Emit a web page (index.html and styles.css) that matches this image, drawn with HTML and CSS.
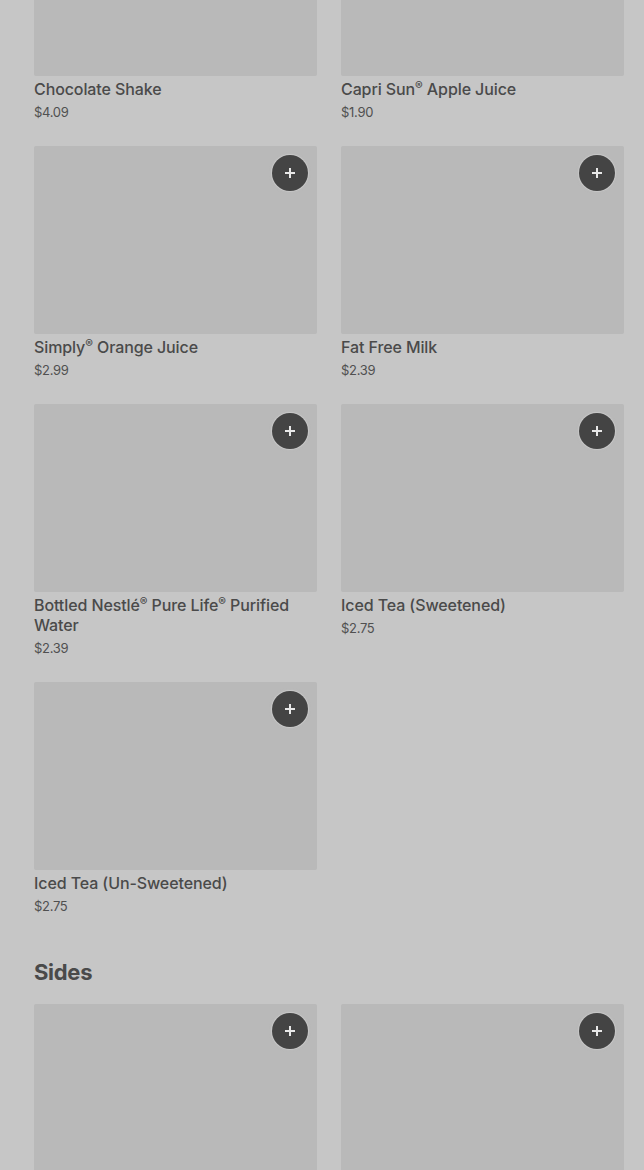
FILE: index.html
```html
<!DOCTYPE html>
<html>
<head>
<meta charset="utf-8">
<link rel="stylesheet" href="styles.css">
</head>
<body>
<main class="page">
  <section class="section">
    <div class="grid first">
      <div class="item">
        <div class="thumb"></div>
        <div class="name">Chocolate Shake</div>
        <div class="price">$4.09</div>
      </div>
      <div class="item">
        <div class="thumb"></div>
        <div class="name">Capri Sun<span class="reg">®</span> Apple Juice</div>
        <div class="price">$1.90</div>
      </div>
      <div class="item">
        <div class="thumb"><button class="add"><svg viewBox="0 0 12 12" width="12" height="12"><path d="M6 1v10M1 6h10" stroke="#e8e8e8" stroke-width="2"/></svg></button></div>
        <div class="name">Simply<span class="reg">®</span> Orange Juice</div>
        <div class="price">$2.99</div>
      </div>
      <div class="item">
        <div class="thumb"><button class="add"><svg viewBox="0 0 12 12" width="12" height="12"><path d="M6 1v10M1 6h10" stroke="#e8e8e8" stroke-width="2"/></svg></button></div>
        <div class="name">Fat Free Milk</div>
        <div class="price">$2.39</div>
      </div>
      <div class="item">
        <div class="thumb"><button class="add"><svg viewBox="0 0 12 12" width="12" height="12"><path d="M6 1v10M1 6h10" stroke="#e8e8e8" stroke-width="2"/></svg></button></div>
        <div class="name">Bottled Nestlé<span class="reg">®</span> Pure Life<span class="reg">®</span> Purified Water</div>
        <div class="price">$2.39</div>
      </div>
      <div class="item">
        <div class="thumb"><button class="add"><svg viewBox="0 0 12 12" width="12" height="12"><path d="M6 1v10M1 6h10" stroke="#e8e8e8" stroke-width="2"/></svg></button></div>
        <div class="name">Iced Tea (Sweetened)</div>
        <div class="price">$2.75</div>
      </div>
      <div class="item">
        <div class="thumb"><button class="add"><svg viewBox="0 0 12 12" width="12" height="12"><path d="M6 1v10M1 6h10" stroke="#e8e8e8" stroke-width="2"/></svg></button></div>
        <div class="name">Iced Tea (Un-Sweetened)</div>
        <div class="price">$2.75</div>
      </div>
    </div>
  </section>
  <section class="section">
    <h2 class="heading">Sides</h2>
    <div class="grid">
      <div class="item">
        <div class="thumb"><button class="add"><svg viewBox="0 0 12 12" width="12" height="12"><path d="M6 1v10M1 6h10" stroke="#e8e8e8" stroke-width="2"/></svg></button></div>
      </div>
      <div class="item">
        <div class="thumb"><button class="add"><svg viewBox="0 0 12 12" width="12" height="12"><path d="M6 1v10M1 6h10" stroke="#e8e8e8" stroke-width="2"/></svg></button></div>
      </div>
    </div>
  </section>
</main>
</body>
</html>
```
FILE: styles.css
```css
html, body {
  margin: 0;
  padding: 0;
  background: #c6c6c6;
}
body {
  font-family: Inter, "Noto Sans", sans-serif;
  color: #4a4a4a;
  overflow: hidden;
  height: 1170px;
}
.page {
  padding: 0 20px 0 34px;
}
.section + .section {
  margin-top: 43px;
}
.grid {
  display: grid;
  grid-template-columns: 283px 283px;
  column-gap: 24px;
  row-gap: 25px;
  align-items: start;
}
.grid.first {
  margin-top: -112px;
}
.item {
  display: flex;
  flex-direction: column;
}
.thumb {
  position: relative;
  height: 188px;
  background: #b9b9b9;
  border-radius: 2px;
}
.add {
  position: absolute;
  top: 9px;
  right: 9px;
  width: 36px;
  height: 36px;
  border: none;
  border-radius: 50%;
  background: #444444;
  box-shadow: 0 0 0 1px rgba(215, 215, 215, 0.4), 0 0 3px rgba(210, 210, 210, 0.5);
  display: flex;
  align-items: center;
  justify-content: center;
  padding: 0;
}
.name {
  margin-top: 3px;
  font-size: 16px;
  line-height: 20px;
  font-weight: 500;
  letter-spacing: -0.1px;
  color: #4a4a4a;
}
.reg {
  font-size: 0.72em;
  line-height: 0;
  position: relative;
  top: -0.45em;
}
.price {
  margin-top: 4px;
  font-size: 13px;
  line-height: 18px;
  letter-spacing: -0.3px;
  color: #505050;
}
.heading {
  margin: 0 0 18px;
  font-size: 22px;
  line-height: 28px;
  font-weight: 700;
  color: #4a4a4a;
  letter-spacing: -0.3px;
}
```
